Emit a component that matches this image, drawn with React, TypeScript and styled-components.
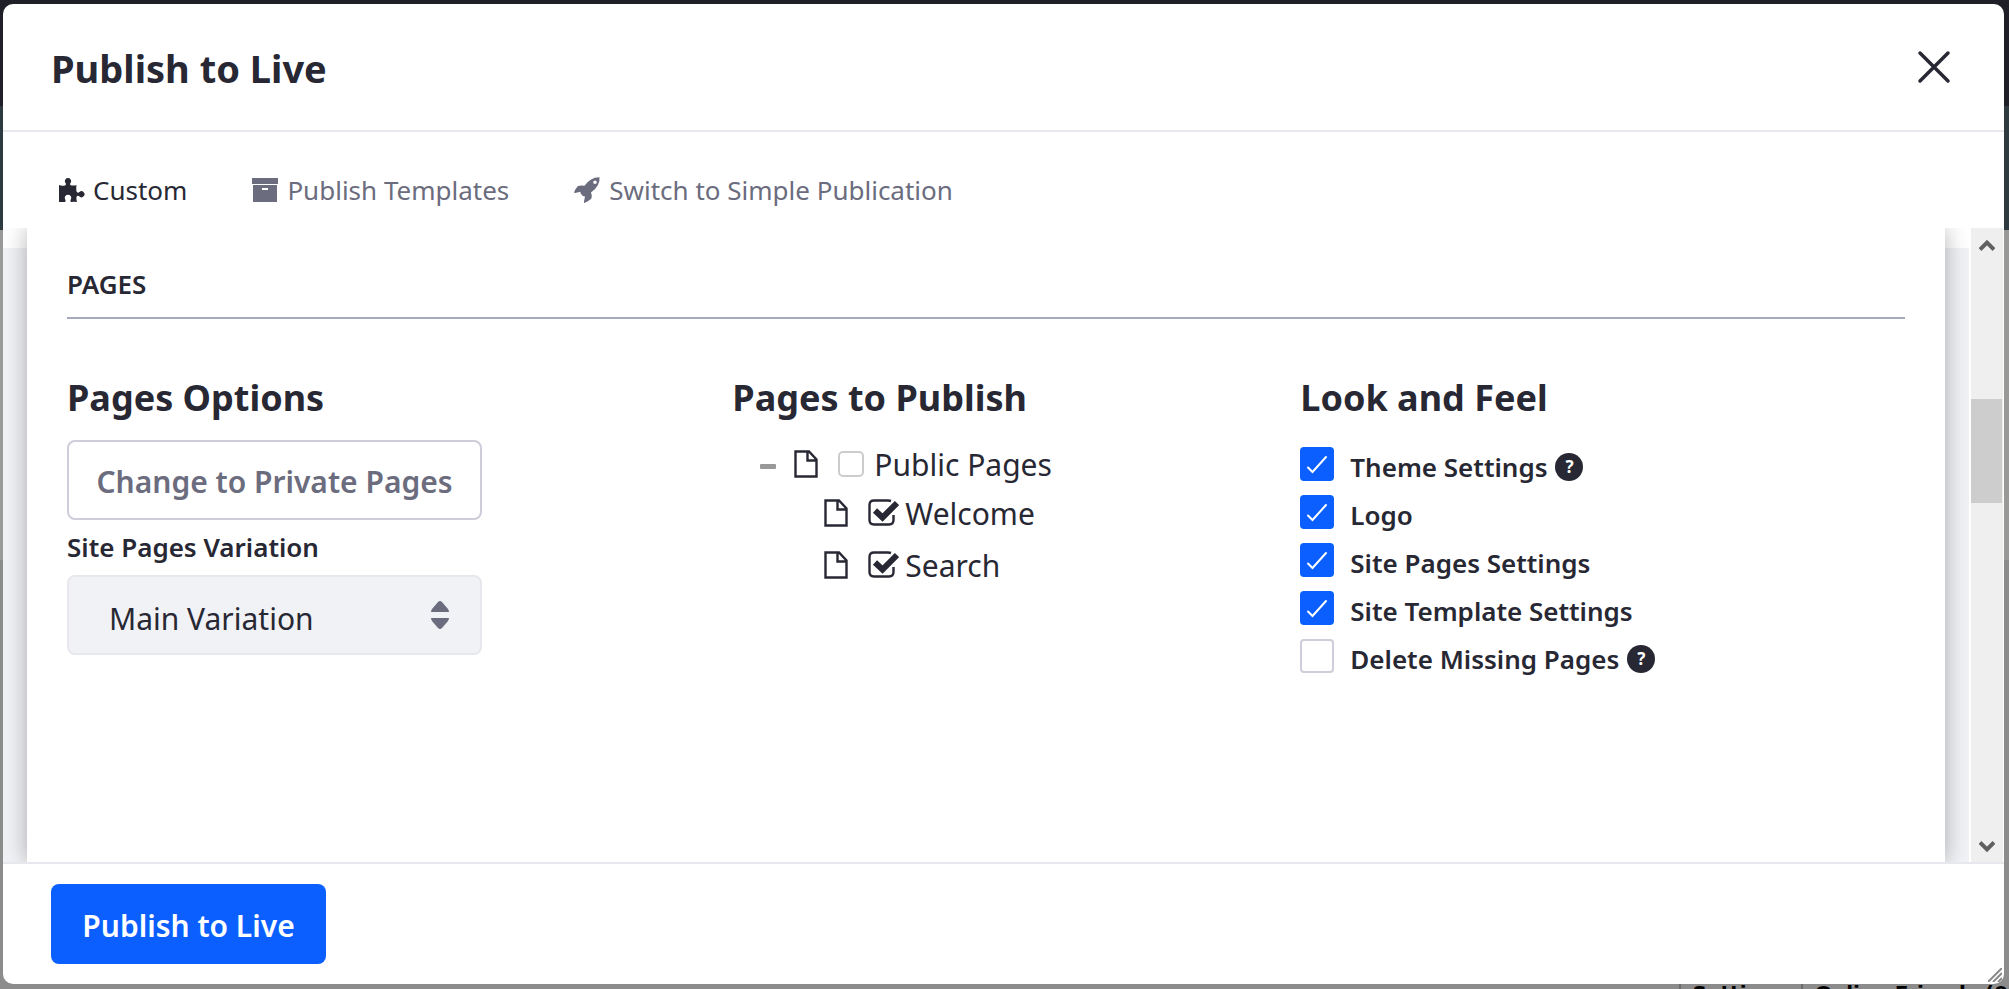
import React from "react";
import styled, { createGlobalStyle, css } from "styled-components";

const ink = "#272833";
const muted = "#6b6c7e";
const line = "#e7e7ed";

const GlobalStyle = createGlobalStyle`
  *, *::before, *::after { box-sizing: border-box; }
  body {
    margin: 0;
    overflow: hidden;
    color: ${ink};
    font-family: "Segoe UI", "Noto Sans", "Open Sans", sans-serif;
    font-size: 26px;
  }
  h1, h2, h3, ul { margin: 0; padding: 0; }
  ul { list-style: none; }
`;

const Backdrop = styled.div`
  display: flex;
  flex-direction: column;
  height: 100vh;
  padding: 4px 5px 0 3px;
  background: linear-gradient(#1f1f28 106px, #2f3940 106px 230px, #999998 230px 560px, #8c8c8c 560px);
`;

const Dialog = styled.main`
  position: relative;
  flex: 1;
  min-height: 0;
  display: flex;
  flex-direction: column;
  overflow: hidden;
  background: #fff;
  border-radius: 10px;
`;

const Header = styled.header`
  display: flex;
  align-items: center;
  justify-content: space-between;
  height: 128px;
  padding: 0 52px 0 48px;
  border-bottom: 2px solid ${line};
`;

const Title = styled.h1`
  padding-top: 2px;
  font-size: 38px;
  line-height: 52px;
  font-weight: 700;
`;

const CloseButton = styled.button`
  display: flex;
  padding: 0;
  border: 0;
  background: none;
  color: ${ink};
`;

const Tabs = styled.nav`
  display: flex;
  gap: 64px;
  height: 96px;
  padding: 38px 54px 0;
`;

const Tab = styled.a<{ $active?: boolean }>`
  display: flex;
  gap: 8px;
  height: 40px;
  align-items: center;
  color: ${(p) => (p.$active ? ink : muted)};
  text-decoration: none;
`;

const Viewport = styled.div`
  flex: 1;
  min-height: 0;
  display: flex;
`;

const Canvas = styled.div`
  flex: 1;
  display: flex;
  padding: 0 24px;
  overflow: hidden;
  background: linear-gradient(#fff 20px, #f1f2f5 20px);
`;

const Sheet = styled.section`
  flex: 1;
  padding: 40px 40px 0;
  background: #fff;
  box-shadow: 0 0 22px rgba(0, 0, 0, 0.3);
`;

const SheetTitle = styled.h2`
  height: 51px;
  border-bottom: 2px solid #a7a9bc;
  font-size: 26px;
  line-height: 32px;
  font-weight: 600;
  text-transform: uppercase;
`;

const Columns = styled.div`
  display: grid;
  grid-template-columns: 362fr 309fr 329fr;
  padding-top: 54px;
`;

const Column = styled.div`
  min-width: 0;
`;

const ColumnTitle = styled.h3`
  font-size: 36px;
  line-height: 50px;
  font-weight: 700;
`;

const controlBox = css`
  display: flex;
  align-items: center;
  width: 415px;
  height: 80px;
  border: 2px solid #cdced9;
  border-radius: 8px;
  font-family: inherit;
  font-size: 30px;
`;

const OutlineButton = styled.button`
  ${controlBox}
  justify-content: center;
  margin-top: 17px;
  padding: 2px 0 0;
  background: #fff;
  color: ${muted};
  font-weight: 600;
  white-space: nowrap;
`;

const FieldLabel = styled.label`
  display: block;
  height: 55px;
  line-height: 54px;
  font-weight: 600;
`;

const SelectWrap = styled.div`
  position: relative;
  width: 415px;
`;

const Select = styled.select`
  ${controlBox}
  appearance: none;
  padding: 6px 40px 0;
  border-color: ${line};
  background: #f1f2f5;
  color: ${ink};
`;

const SelectArrows = styled.svg`
  position: absolute;
  top: 26px;
  right: 33px;
  pointer-events: none;
`;

const Tree = styled.ul`
  padding-top: 18px;
  font-size: 30px;
`;

const TreeItem = styled.li<{ $level: number }>`
  display: flex;
  align-items: center;
  height: ${(p) => (p.$level ? 52 : 46)}px;
  padding-left: ${(p) => (p.$level ? 92 : 28)}px;
`;

const Toggle = styled.button`
  width: 16px;
  height: 5px;
  margin: 4px 18px 0 0;
  padding: 0;
  border: 0;
  border-radius: 1px;
  background: #999;
`;

const TreeCheck = styled.label`
  display: flex;
  align-items: center;
  gap: 6px;
  margin-left: 20px;
  white-space: nowrap;
`;

const HiddenInput = styled.input`
  position: absolute;
  opacity: 0;
`;

const Options = styled.ul`
  padding-top: 20px;
`;

const Option = styled.li`
  display: flex;
  align-items: center;
  height: 48px;
`;

const OptionLabel = styled.label`
  display: flex;
  align-items: center;
  gap: 16px;
  font-weight: 600;
  white-space: nowrap;
`;

const Box = styled.span<{ $on?: boolean }>`
  display: flex;
  width: 34px;
  height: 34px;
  margin-bottom: 6px;
  border: 2px solid ${(p) => (p.$on ? "#0b5fff" : "#cdced9")};
  border-radius: 4px;
  background: ${(p) => (p.$on ? "#0b5fff" : "#fff")};
`;

const Help = styled.span`
  display: grid;
  place-items: center;
  width: 28px;
  height: 28px;
  margin-left: 8px;
  border-radius: 50%;
  background: ${ink};
  color: #fff;
  font-size: 17px;
  line-height: 20px;
  font-weight: 700;
`;

const Scrollbar = styled.div`
  display: flex;
  flex-direction: column;
  justify-content: space-between;
  align-items: center;
  width: 34px;
  margin-right: 1px;
  padding: 11px 1px 9px 0;
  border-left: 2px solid #fff;
  background: #efefef;
`;

const Thumb = styled.div`
  width: 31px;
  height: 104px;
  margin: 148px 0 auto;
  background: #cdcdcd;
`;

const Footer = styled.footer`
  padding: 20px 48px;
  border-top: 2px solid ${line};
`;

const PrimaryButton = styled.button`
  height: 80px;
  width: 275px;
  padding: 2px 0 0;
  border: 0;
  border-radius: 8px;
  background: #0b5fff;
  color: #fff;
  font-family: inherit;
  font-size: 30px;
  font-weight: 600;
`;

const Grip = styled.svg`
  position: absolute;
  right: 2px;
  bottom: 2px;
`;

const Dock = styled.aside`
  display: flex;
  justify-content: flex-end;
  height: 5px;
  overflow: hidden;
  margin-right: -27px;
  color: #000;
  font: 700 20px/18px "DejaVu Sans", sans-serif;
`;

const DockItem = styled.span`
  height: 18px;
  padding: 0 14px 0 12px;
  border-left: 2px solid #6c6c6c;
  white-space: nowrap;
`;

const FileIcon = () => (
  <svg width="24" height="28" viewBox="0 0 24 28" fill="none" stroke={ink} strokeWidth="2.4">
    <path d="M1.500 1.500H15L22.500 9.500V26.500H1.500z M13.500 1.500V10.500H22.500" />
  </svg>
);

const TreeBox = ({ on }: { on?: boolean }) =>
  on ? (
    <svg width="31" height="28" viewBox="0 0 31 28" fill="none" stroke={ink}>
      <path strokeWidth="2.400" d="M23 2Q21.500 1.500 20 1.500H6Q1.500 1.500 1.500 6V21Q1.500 25.500 6 25.500H21Q25.500 25.500 25.500 21V16" />
      <path strokeWidth="6" d="M7 11.500L14.500 18.500L29 4" />
    </svg>
  ) : (
    <svg width="30" height="28" viewBox="0 0 30 28" fill="none" stroke="#ccc" strokeWidth="2">
      <rect x="1" y="2" width="24" height="24" rx="4" />
    </svg>
  );

const options = [
  { label: "Theme Settings", on: true, help: true },
  { label: "Logo", on: true },
  { label: "Site Pages Settings", on: true },
  { label: "Site Template Settings", on: true },
  { label: "Delete Missing Pages", on: false, help: true },
];

const pages = [
  { label: "Public Pages", level: 0, on: false },
  { label: "Welcome", level: 1, on: true },
  { label: "Search", level: 1, on: true },
];

export default function App() {
  return (
    <Backdrop>
      <GlobalStyle />
      <Dialog>
        <Header>
          <Title>Publish to Live</Title>
          <CloseButton aria-label="Close">
            <svg width="36" height="36" viewBox="0 0 36 36" stroke="currentColor" strokeWidth="3.500" strokeLinecap="round">
              <path d="M4 4L32 32M32 4L4 32" />
            </svg>
          </CloseButton>
        </Header>
        <Tabs>
          <Tab href="#custom" $active>
            <svg width="28" height="28" viewBox="0 0 28 28" fill="currentColor">
              <path d="M2 9Q5 10.500 8.500 9.200Q9.500 8 8.200 6.500A3.100 3.100 0 1 1 13.800 6.500Q12.500 8 13.500 9.200Q17 10 19.500 9Q19 12 19.500 15.500Q20.500 17.500 22.500 16A3 3 0 1 1 22.500 20.500Q20.500 18.800 19.500 21Q19.200 24 20 26Q17 25.500 14 26Q12.800 25 14 23A3.200 3.200 0 1 0 8 23Q9.200 25 8 26H2Z" />
            </svg>
            Custom
          </Tab>
          <Tab href="#templates">
            <svg width="28" height="28" viewBox="0 0 28 28" fill="currentColor">
              <path d="M1 2H27V8H1Z M2 9H26V26H2Z M11 12V14H17V12Z" fillRule="evenodd" />
            </svg>
            Publish Templates
          </Tab>
          <Tab href="#simple">
            <svg width="28" height="28" viewBox="0 0 28 28" fill="currentColor">
              <path
                fillRule="evenodd"
                d="M26.500 1.200Q27.500 9.500 18 16.500Q19.500 21 18 23Q15 25.500 11.500 27Q10.500 26.800 11 25.500L12 20.500Q9.500 20.500 8.500 18.500Q7 17.500 7.500 15.800L2 17Q.8 17 1.200 16Q2.500 12.500 5 10Q7.500 9 11.500 9.800Q17.500 1 26.500 1.200ZM22 4.500A1.800 1.800 0 1 0 22 8.100A1.800 1.800 0 1 0 22 4.500Z"
              />
            </svg>
            Switch to Simple Publication
          </Tab>
        </Tabs>
        <Viewport>
          <Canvas>
            <Sheet>
              <SheetTitle>Pages</SheetTitle>
              <Columns>
                <Column>
                  <ColumnTitle>Pages Options</ColumnTitle>
                  <OutlineButton>Change to Private Pages</OutlineButton>
                  <FieldLabel htmlFor="variation">Site Pages Variation</FieldLabel>
                  <SelectWrap>
                    <Select id="variation">
                      <option>Main Variation</option>
                    </Select>
                    <SelectArrows width="18" height="28" viewBox="0 0 18 28" fill={muted}>
                      <path d="M9 0Q10 0 11 1L17 8Q18 9.500 18 11H0Q0 9.500 1 8L7 1Q8 0 9 0Z M9 28Q10 28 11 27L17 20Q18 18.500 18 17H0Q0 18.500 1 20L7 27Q8 28 9 28Z" />
                    </SelectArrows>
                  </SelectWrap>
                </Column>
                <Column>
                  <ColumnTitle>Pages to Publish</ColumnTitle>
                  <Tree>
                    {pages.map((p) => (
                      <TreeItem key={p.label} $level={p.level}>
                        {p.level === 0 && <Toggle aria-label="Collapse" />}
                        <FileIcon />
                        <TreeCheck>
                          <HiddenInput type="checkbox" defaultChecked={p.on} />
                          <TreeBox on={p.on} />
                          {p.label}
                        </TreeCheck>
                      </TreeItem>
                    ))}
                  </Tree>
                </Column>
                <Column>
                  <ColumnTitle>Look and Feel</ColumnTitle>
                  <Options>
                    {options.map((o) => (
                      <Option key={o.label}>
                        <OptionLabel>
                          <HiddenInput type="checkbox" defaultChecked={o.on} />
                          <Box $on={o.on}>
                            {o.on && (
                              <svg width="30" height="30" viewBox="0 0 30 30" fill="none" stroke="#fff" strokeWidth="2" strokeLinecap="round">
                                <path d="M6 18.500L10.500 23L24 8" />
                              </svg>
                            )}
                          </Box>
                          {o.label}
                        </OptionLabel>
                        {o.help && <Help>?</Help>}
                      </Option>
                    ))}
                  </Options>
                </Column>
              </Columns>
            </Sheet>
          </Canvas>
          <Scrollbar>
            <svg width="16" height="12" viewBox="0 0 16 12" fill="none" stroke="#606060" strokeWidth="4">
              <path d="M1 10.500L8 3.500L15 10.500" />
            </svg>
            <Thumb />
            <svg width="16" height="12" viewBox="0 0 16 12" fill="none" stroke="#606060" strokeWidth="4">
              <path d="M1 1.500L8 8.500L15 1.500" />
            </svg>
          </Scrollbar>
        </Viewport>
        <Footer>
          <PrimaryButton>Publish to Live</PrimaryButton>
        </Footer>
        <Grip width="14" height="14" viewBox="0 0 14 14" stroke="#8a8a8a" strokeWidth="2">
          <path d="M0 14L14 0M5 14L14 5M10 14L14 10" />
        </Grip>
      </Dialog>
      <Dock>
        <DockItem>Settings</DockItem>
        <DockItem>Online Friends (0)</DockItem>
      </Dock>
    </Backdrop>
  );
}
